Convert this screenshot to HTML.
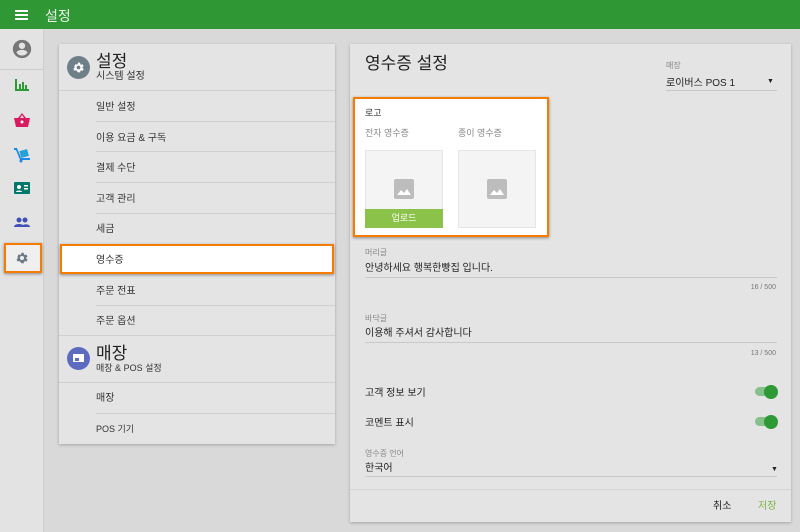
<!DOCTYPE html>
<html><head><meta charset="utf-8"><style>
*{margin:0;padding:0;box-sizing:border-box}
body{width:800px;height:532px;overflow:hidden;background:#d9d9d9;font-family:"Liberation Sans","Noto Sans CJK KR",sans-serif;color:#222;position:relative;line-height:1}
.a{position:absolute;white-space:nowrap}
.m{margin-top:3px}
.top{left:0;top:0;width:800px;height:29px;background:#2f9835}
.side{left:0;top:29px;width:44px;height:503px;background:#e3e3e3;border-right:1px solid #cfcfcf}
.card{background:#e4e4e4;box-shadow:0 1px 3px rgba(0,0,0,.25)}
.it{font-size:10px;color:#333;margin-top:3px}
.dv{height:1px;background:#d0d0d0}
.sm{font-size:8px;color:#888;margin-top:3px}
.tx{font-size:10px;color:#222;margin-top:3px}
.tg{width:22px;height:9px;border-radius:5px;background:#86c08a}
.tg:after{content:"";position:absolute;right:-1px;top:-2.5px;width:14px;height:14px;border-radius:50%;background:#2e9a36}
</style></head><body>
<div class="a top"></div>
<div class="a" style="left:15px;top:10px;width:13px;height:2px;background:#fff;box-shadow:0 4px 0 #fff,0 8px 0 #fff"></div>
<div class="a" style="left:45px;top:9px;color:#e8f5e9;font-size:14px">설정</div>
<div class="a side"></div>
<svg class="a" style="left:11px;top:38px" width="22" height="22" viewBox="0 0 24 24"><path fill="#777" d="M12 2a10 10 0 100 20 10 10 0 000-20zm0 3a3.5 3.5 0 110 7 3.5 3.5 0 010-7zm0 14.2a7.2 7.2 0 01-6-3.2c0-2 4-3.1 6-3.1s6 1.1 6 3.1a7.2 7.2 0 01-6 3.2z"/></svg>
<div class="a" style="left:0;top:69px;width:44px;height:1px;background:#ccc"></div>
<svg class="a" style="left:15px;top:79px" width="14" height="12"><path fill="#2e9a36" d="M0 0h2v12H0zM0 10h14v2H0zM4 5h2v7H4zM7 3h2v9H7zM10 6h2v6h-2z"/></svg>
<svg class="a" style="left:14px;top:113px" width="16" height="14"><path fill="#d81b60" d="M0 5h16l-2 9H2zM4 5l4-5 4 5h-2L8 2 6 5z"/><circle cx="8" cy="9" r="1.5" fill="#fff"/></svg>
<svg class="a" style="left:14px;top:147px" width="16" height="16"><path fill="#1e88e5" d="M0 1l3 0 4 10h9v2H6L2 3H0z"/><rect x="6" y="3" width="8" height="7" fill="#26a0d8" transform="rotate(-15 10 6)"/><circle cx="7" cy="14" r="1.5" fill="#1e88e5"/></svg>
<svg class="a" style="left:14px;top:182px" width="16" height="12"><rect width="16" height="12" rx="1" fill="#00796b"/><circle cx="5" cy="5" r="2" fill="#fff"/><path fill="#fff" d="M2 10c0-2 6-2 6 0zM10 3h4v1.5h-4zM10 6h4v1.5h-4z"/></svg>
<svg class="a" style="left:14px;top:217px" width="16" height="10"><circle cx="5" cy="3" r="2.5" fill="#3f51b5"/><circle cx="11" cy="3" r="2.5" fill="#3f51b5"/><path fill="#3f51b5" d="M0 10c0-4 10-4 10 0zM7 10c0-3 9-4 9 0z"/></svg>
<div class="a" style="left:4px;top:243px;width:38px;height:30px;border:2px solid #f57c00;background:#efefef;box-shadow:0 1px 3px rgba(0,0,0,.4)"></div>
<svg class="a" style="left:15px;top:251px" width="14" height="14" viewBox="0 0 24 24"><path fill="#6b7a83" d="M19.4 13a7.5 7.5 0 000-2l2.1-1.6-2-3.5-2.5 1a7 7 0 00-1.7-1L15 3h-4l-.4 2.7a7 7 0 00-1.7 1l-2.5-1-2 3.5L4.6 11a7.5 7.5 0 000 2l-2.1 1.6 2 3.5 2.5-1a7 7 0 001.7 1L11 21h4l.4-2.7a7 7 0 001.7-1l2.5 1 2-3.5zM12 15.5a3.5 3.5 0 110-7 3.5 3.5 0 010 7z"/></svg>

<div class="a card" style="left:59px;top:44px;width:276px;height:400px"></div>
<div class="a" style="left:67px;top:56px;width:23px;height:23px;border-radius:50%;background:#6f7f88"></div>
<svg class="a" style="left:72px;top:61px" width="13" height="13" viewBox="0 0 24 24"><path fill="#fff" d="M19.4 13a7.5 7.5 0 000-2l2.1-1.6-2-3.5-2.5 1a7 7 0 00-1.7-1L15 3h-4l-.4 2.7a7 7 0 00-1.7 1l-2.5-1-2 3.5L4.6 11a7.5 7.5 0 000 2l-2.1 1.6 2 3.5 2.5-1a7 7 0 001.7 1L11 21h4l.4-2.7a7 7 0 001.7-1l2.5 1 2-3.5zM12 15.5a3.5 3.5 0 110-7 3.5 3.5 0 010 7z"/></svg>
<div class="a" style="left:96px;top:53px;font-size:17px">설정</div>
<div class="a" style="left:96px;top:72px;font-size:10px;color:#333">시스템 설정</div>
<div class="a dv" style="left:59px;top:90px;width:276px"></div>
<div class="a it" style="left:96px;top:100px">일반 설정</div>
<div class="a dv" style="left:96px;top:121px;width:239px"></div>
<div class="a it" style="left:96px;top:131px">이용 요금 &amp; 구독</div>
<div class="a dv" style="left:96px;top:151px;width:239px"></div>
<div class="a it" style="left:96px;top:161px">결제 수단</div>
<div class="a dv" style="left:96px;top:182px;width:239px"></div>
<div class="a it" style="left:96px;top:192px">고객 관리</div>
<div class="a dv" style="left:96px;top:213px;width:239px"></div>
<div class="a it" style="left:96px;top:222px">세금</div>
<div class="a" style="left:60px;top:244px;width:274px;height:30px;border:2px solid #f57c00;background:#fff;box-shadow:0 1px 3px rgba(0,0,0,.4)"></div>
<div class="a it" style="left:96px;top:253px">영수증</div>
<div class="a it" style="left:96px;top:284px">주문 전표</div>
<div class="a dv" style="left:96px;top:305px;width:239px"></div>
<div class="a it" style="left:96px;top:314px">주문 옵션</div>
<div class="a dv" style="left:59px;top:335px;width:276px"></div>
<div class="a" style="left:67px;top:347px;width:23px;height:23px;border-radius:50%;background:#5c6bc0"></div>
<div class="a" style="left:73px;top:354px;width:11px;height:8px;background:#fff;border-top:3px solid #fff"></div>
<div class="a" style="left:75px;top:358px;width:4px;height:3px;background:#5c6bc0"></div>
<div class="a" style="left:96px;top:345px;font-size:17px">매장</div>
<div class="a" style="left:96px;top:364px;font-size:9px;color:#333">매장 &amp; POS 설정</div>
<div class="a dv" style="left:59px;top:382px;width:276px"></div>
<div class="a it" style="left:96px;top:391px">매장</div>
<div class="a dv" style="left:96px;top:413px;width:239px"></div>
<div class="a it" style="left:96px;top:422px;font-size:9px">POS 기기</div>

<div class="a card" style="left:350px;top:44px;width:441px;height:478px"></div>
<div class="a" style="left:365px;top:55px;font-size:17px">영수증 설정</div>
<div class="a sm" style="left:666px;top:59px">매장</div>
<div class="a tx" style="left:666px;top:76px">로이버스 POS 1</div>
<div class="a" style="left:767px;top:78px;font-size:7px">▼</div>
<div class="a" style="left:666px;top:90px;width:111px;height:1px;background:#c8c8c8"></div>
<div class="a" style="left:353px;top:97px;width:196px;height:140px;border:2px solid #f57c00;background:#fff;box-shadow:0 1px 3px rgba(0,0,0,.4)"></div>
<div class="a m" style="left:365px;top:106px;font-size:9px;color:#333">로고</div>
<div class="a m" style="left:365px;top:126px;font-size:9px;color:#888">전자 영수증</div>
<div class="a m" style="left:458px;top:126px;font-size:9px;color:#888">종이 영수증</div>
<div class="a" style="left:365px;top:150px;width:78px;height:78px;background:#f4f4f4;border:1px solid #e6e6e6"></div>
<div class="a" style="left:458px;top:150px;width:78px;height:78px;background:#f4f4f4;border:1px solid #e6e6e6"></div>
<svg class="a" style="left:394px;top:179px" width="20" height="20"><rect width="20" height="20" rx="2" fill="#bdbdbd"/><path fill="#fff" d="M3 16l4-5 3 3 3-4 4 6z"/></svg>
<svg class="a" style="left:487px;top:179px" width="20" height="20"><rect width="20" height="20" rx="2" fill="#bdbdbd"/><path fill="#fff" d="M3 16l4-5 3 3 3-4 4 6z"/></svg>
<div class="a" style="left:365px;top:209px;width:78px;height:19px;background:#8bc34a;color:#fff;font-size:9px;text-align:center;line-height:19px">업로드</div>
<div class="a sm" style="left:365px;top:246px">머리글</div>
<div class="a tx" style="left:365px;top:261px">안녕하세요 행복한빵집 입니다.</div>
<div class="a" style="left:365px;top:277px;width:412px;height:1px;background:#c8c8c8"></div>
<div class="a m" style="left:740px;top:281px;font-size:7px;color:#777;width:36px;text-align:right">16 / 500</div>
<div class="a sm" style="left:365px;top:312px">바닥글</div>
<div class="a tx" style="left:365px;top:326px">이용해 주셔서 감사합니다</div>
<div class="a" style="left:365px;top:342px;width:412px;height:1px;background:#c8c8c8"></div>
<div class="a m" style="left:740px;top:347px;font-size:7px;color:#777;width:36px;text-align:right">13 / 500</div>
<div class="a tx" style="left:365px;top:386px">고객 정보 보기</div>
<div class="a tg" style="left:755px;top:387px"></div>
<div class="a tx" style="left:365px;top:416px">코멘트 표시</div>
<div class="a tg" style="left:755px;top:417px"></div>
<div class="a sm" style="left:365px;top:447px">영수증 언어</div>
<div class="a tx" style="left:365px;top:461px">한국어</div>
<div class="a" style="left:771px;top:466px;font-size:7px">▼</div>
<div class="a" style="left:365px;top:476px;width:412px;height:1px;background:#c8c8c8"></div>
<div class="a" style="left:350px;top:489px;width:441px;height:1px;background:#d4d4d4"></div>
<div class="a tx" style="left:713px;top:499px">취소</div>
<div class="a tx" style="left:758px;top:499px;color:#7cb342">저장</div>
</body></html>
